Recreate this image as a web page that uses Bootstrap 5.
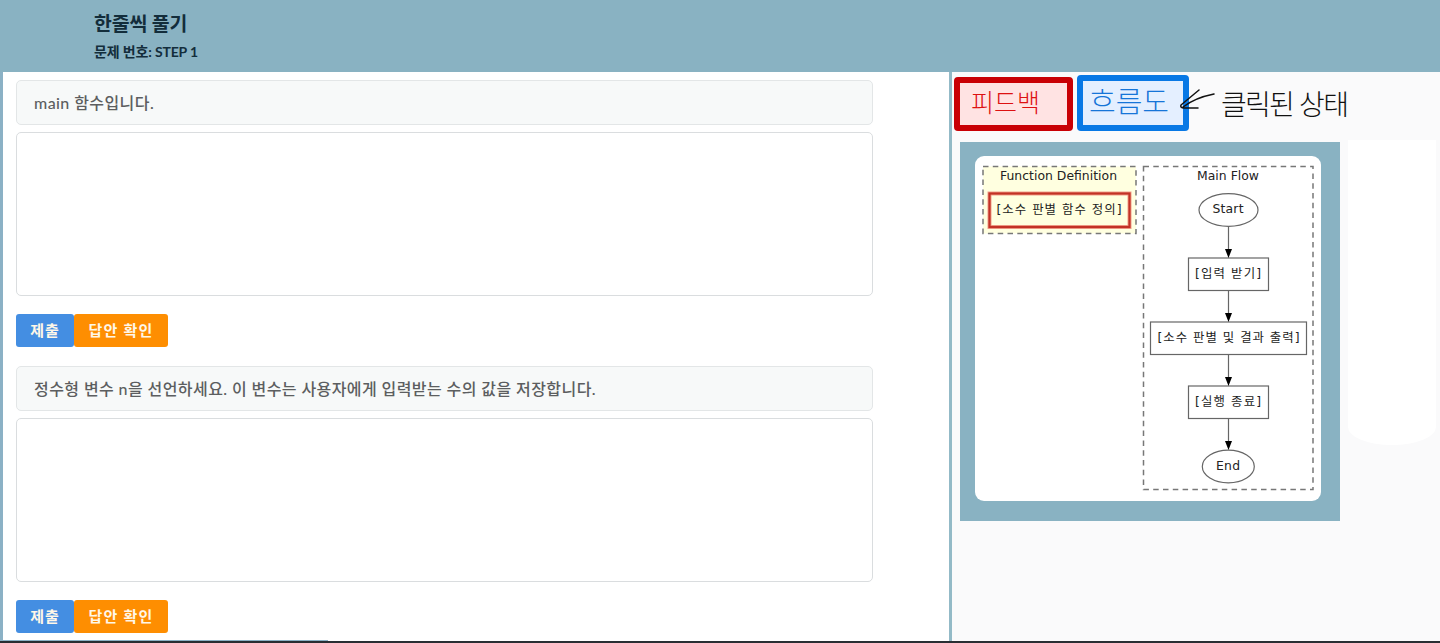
<!DOCTYPE html>
<html lang="ko">
<head>
<meta charset="utf-8">
<meta name="viewport" content="width=device-width, initial-scale=1">
<title>한줄씩 풀기</title>
<link rel="stylesheet" href="https://cdn.jsdelivr.net/npm/bootstrap@5.3.0/dist/css/bootstrap.min.css">
<style>
  :root { --teal: #89b2c2; }
  body { font-family: Lato, "Noto Sans CJK KR", sans-serif; background: #fff; }
  .page-shell { height: 643px; border-bottom: 2px solid #292e33; }
  .top-bar { height: 72px; background: var(--teal); padding: 11px 0 0 94px; color: #132d3b; }
  .top-title { font-size: 19.400px; line-height: 26px; letter-spacing: -.1px; }
  .top-step { font-size: 14px; line-height: 20px; margin-top: 5px; letter-spacing: -.15px; }
  .work-pane { width: 952px; border-left: 3px solid #8bb1c5; border-right: 3px solid #93bac7; padding: 8px 0 0 13px; }
  .step-block { width: 857px; }
  .step-block + .step-block { margin-top: 19px; }
  .prompt-box { height: 45px; background: #f7f9f9; border: 1px solid #e3e6e7; border-radius: 5px; padding: 0 17px;
    color: #5c5e60; font-size: 16px; font-weight: 500; line-height: 43px; letter-spacing: .42px; white-space: nowrap; }
  .answer-box { height: 164px; margin-top: 7px; border: 1px solid #dadddf; border-radius: 5px; resize: none; box-shadow: none; }
  .step-actions { margin-top: 18px; }
  .step-actions .btn { height: 33px; padding: 0; border: 0; border-radius: 3px; font-size: 15px; font-weight: 700; line-height: 33px; letter-spacing: 1px; color: #fff7e8; }
  .btn-submit, .btn-submit:hover { width: 58px; background: #448ee2; }
  .step-actions .btn-answer { width: 94px; background: #fe8e01; letter-spacing: 1.200px; }
  .side-pane { background: #fafafb; padding: 3px 0 0 2px; }
  .tab-row { height: 56px; }
  .note-tab { font-family: "Noto Sans CJK KR", sans-serif; font-weight: 300; line-height: 1; border-radius: 4px; padding: 0; background: #ffe3e3; }
  .tab-feedback { width: 119px; height: 54px; margin-top: 2px; border: 6px solid #c90005; color: #d11; font-size: 25px; padding: 6px 0 0 11px; }
  .tab-flow { width: 112px; height: 56px; margin-left: 4px; border: 6px solid #0878e5; background: #e4efff; color: #1675d8; font-size: 29px; padding: 5px 0 0 6px; }
  .state-note { margin: 10px 0 0 5px; height: 36px; font: 300 28px/36px "Noto Sans CJK KR", sans-serif; color: #111; letter-spacing: -1.750px; white-space: nowrap; }
  .arrow-mark { margin: 12px 0 0 -9px; z-index: 1; }
  .flow-frame { width: 380px; height: 379px; margin: 11px 0 0 6px; padding: 14px 0 0 15px; background: var(--teal); }
  .flow-sheet { width: 346px; height: 345px; background: #fff; border-radius: 9px; }
  .flow-sheet text { font-family: "DejaVu Sans", "Noto Sans CJK KR", sans-serif; font-size: 12.400px; fill: #222; text-anchor: middle; }
  .clear-area { width: 88px; height: 305px; margin: 9px 0 0 8px; background: #fff; border-radius: 0 0 44px 44px / 0 0 18px 18px; }
  .scroll-mark { left: 0; bottom: 0; width: 328px; height: 1px; background: #8bb1c5; }
</style>
</head>
<body class="overflow-hidden">
<div class="page-shell d-flex flex-column position-relative">
  <header class="top-bar flex-shrink-0">
    <h1 class="top-title fw-bold mb-0">한줄씩 풀기</h1>
    <div class="top-step fw-bold">문제 번호: STEP 1</div>
  </header>
  <div class="d-flex flex-grow-1 overflow-hidden">
    <main class="work-pane flex-shrink-0">
      <section class="step-block">
        <div class="prompt-box">main 함수입니다.</div>
        <textarea class="answer-box form-control d-block" aria-label="답안 1"></textarea>
        <div class="step-actions d-flex">
          <button class="btn btn-submit" type="button">제출</button>
          <button class="btn btn-answer" type="button">답안 확인</button>
        </div>
      </section>
      <section class="step-block">
        <div class="prompt-box">정수형 변수 n을 선언하세요. 이 변수는 사용자에게 입력받는 수의 값을 저장합니다.</div>
        <textarea class="answer-box form-control d-block" aria-label="답안 2"></textarea>
        <div class="step-actions d-flex">
          <button class="btn btn-submit" type="button">제출</button>
          <button class="btn btn-answer" type="button">답안 확인</button>
        </div>
      </section>
    </main>
    <aside class="side-pane flex-grow-1">
      <div class="tab-row d-flex align-items-start">
        <button class="note-tab tab-feedback text-start flex-shrink-0 d-flex align-items-start" type="button">피드백</button>
        <button class="note-tab tab-flow text-start flex-shrink-0 d-flex align-items-start" type="button">흐름도</button>
        <svg class="arrow-mark flex-shrink-0" width="36" height="26" viewBox="0 0 36 26" fill="none" stroke="#111" stroke-width="1.5" stroke-linecap="round" stroke-linejoin="round">
          <path d="M34 7C24 9 12 13 3 20M19 3L1 18Q0 21 4 21L18 21"/>
        </svg>
        <div class="state-note">클릭된 상태</div>
      </div>
      <div class="d-flex">
        <div class="flow-frame flex-shrink-0">
          <div class="flow-sheet">
            <svg class="d-block" width="346" height="345" viewBox="975 156 346 345">
              <rect x="983" y="166.500" width="153" height="67" fill="#ffffe0"/>
              <g fill="none" stroke="#777" stroke-width="1.500" stroke-dasharray="5.500 4.300">
                <path d="M983 166.500H1136V233.500H983Z"/>
                <path d="M1143.500 166.500H1313V489.500H1143.500Z"/>
              </g>
              <rect x="989.500" y="193.500" width="140" height="33.500" fill="#ffffe0" stroke="#f2a08c" stroke-width="4"/>
              <rect x="989.500" y="193.500" width="140" height="33.500" fill="none" stroke="#c23226" stroke-width="2.200"/>
              <g fill="none" stroke="#666" stroke-width="1.200">
                <ellipse cx="1228.500" cy="210" rx="29.500" ry="16.300"/>
                <rect x="1188.500" y="258" width="80" height="32.500"/>
                <rect x="1150.500" y="322" width="156" height="32.500"/>
                <rect x="1188.500" y="386" width="80" height="32.500"/>
                <ellipse cx="1228.300" cy="466.500" rx="26" ry="16.300"/>
                <path d="M1228.500 226.500V250M1228.500 290.500V314M1228.500 354.500V378M1228.500 418.500V442"/>
              </g>
              <path fill="#000" d="M1225 249h7l-3.500 9zM1225 313h7l-3.500 9zM1225 377h7l-3.500 9zM1225 441h7l-3.500 9z"/>
              <text x="1058.500" y="180" textLength="117">Function Definition</text>
              <text x="1228" y="180" textLength="62">Main Flow</text>
              <text x="1059" y="214" textLength="125">[소수 판별 함수 정의]</text>
              <text x="1228" y="213" textLength="31">Start</text>
              <text x="1228" y="278" textLength="66">[입력 받기]</text>
              <text x="1228.500" y="342" textLength="142">[소수 판별 및 결과 출력]</text>
              <text x="1228" y="406" textLength="66">[실행 종료]</text>
              <text x="1228" y="469.500" textLength="24">End</text>
            </svg>
          </div>
        </div>
        <div class="clear-area"></div>
      </div>
    </aside>
  </div>
  <div class="scroll-mark position-absolute"></div>
</div>
<script src="https://cdn.jsdelivr.net/npm/bootstrap@5.3.0/dist/js/bootstrap.bundle.min.js"></script>
</body>
</html>
